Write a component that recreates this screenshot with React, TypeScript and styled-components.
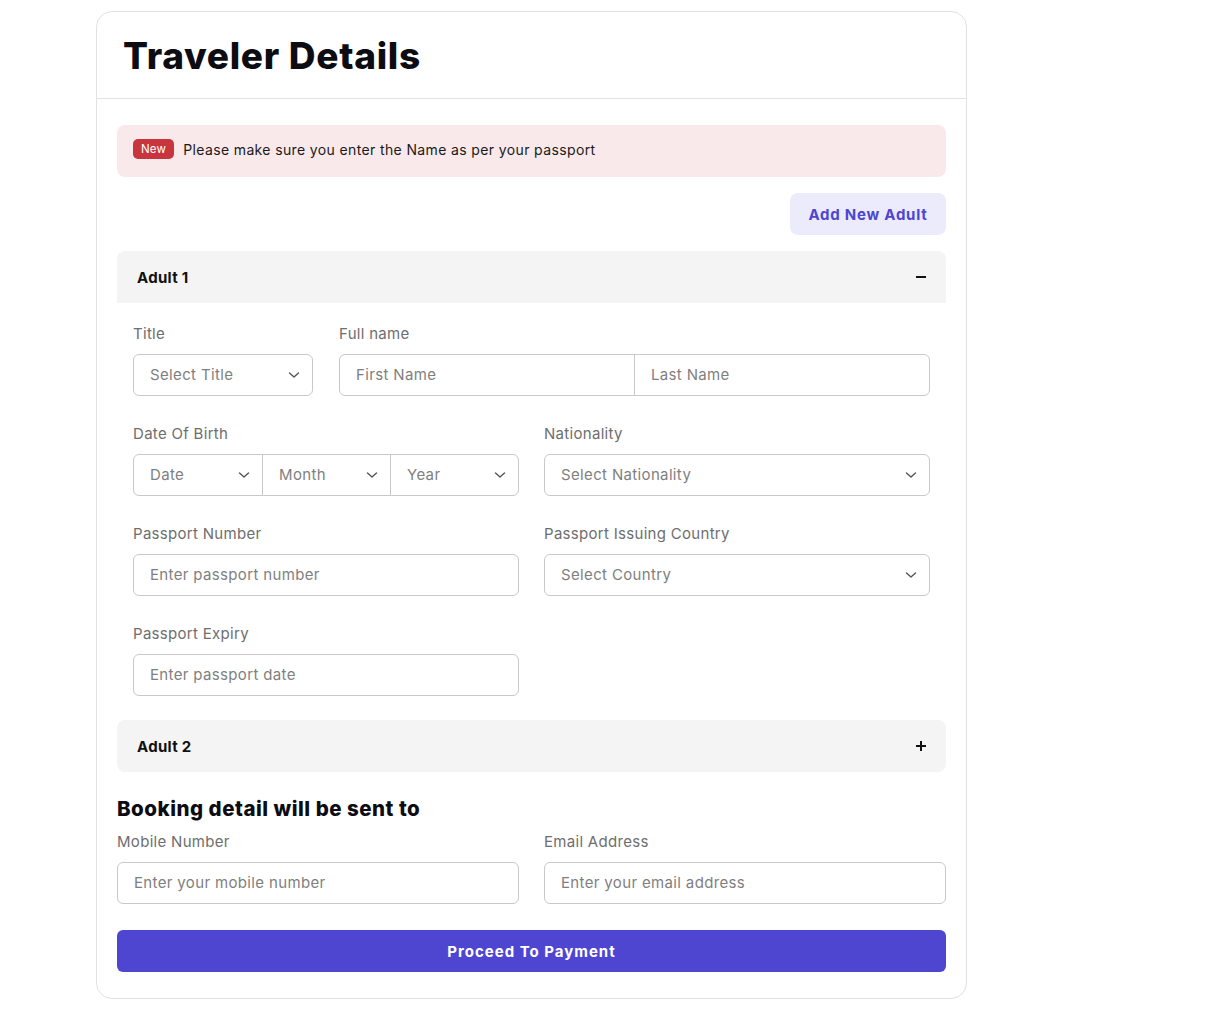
import React from "react";
import styled, { createGlobalStyle } from "styled-components";

const Global = createGlobalStyle`
  html, body { margin: 0; padding: 0; background: #ffffff; }
  body { font-family: "Inter", "Noto Sans", sans-serif; color: #111; }
  * { box-sizing: border-box; }
`;

const Page = styled.div`
  padding: 11px 0 0 96px;
  width: 1214px;
  min-height: 1030px;
`;

const Card = styled.div`
  width: 871px;
  border: 1px solid #e1e1e1;
  border-radius: 16px;
  background: #fff;
`;

const Header = styled.div`
  height: 87px;
  border-bottom: 1px solid #e1e1e1;
  display: flex;
  align-items: center;
  padding: 0 26px;
`;

const Title = styled.h1`
  margin: 0;
  font-family: "Inter", sans-serif;
  font-weight: 800;
  font-size: 37px;
  letter-spacing: 0.7px;
  color: #0c0c12;
  padding-top: 1px;
`;

const Body = styled.div`
  padding: 26px 20px 26px 20px;
  display: flex;
  flex-direction: column;
`;

const Alert = styled.div`
  height: 52px;
  background: #f9e9ea;
  border-radius: 8px;
  display: flex;
  align-items: center;
  gap: 9px;
  padding: 0 16px;
  font-size: 14px;
  color: #1a1a1a;
  letter-spacing: 0.37px;
  padding-bottom: 4px;
`;

const Badge = styled.span`
  background: #c9353f;
  color: #fff;
  font-size: 11.5px;
  letter-spacing: 0.2px;
  border-radius: 5px;
  padding: 0 8px;
  height: 20px;
  line-height: 20px;
`;

const AddRow = styled.div`
  display: flex;
  justify-content: flex-end;
  margin-top: 16px;
`;

const AddButton = styled.button`
  height: 42px;
  width: 156px;
  border: none;
  border-radius: 8px;
  background: #ecebfc;
  color: #4d46d0;
  font-family: "Inter", sans-serif;
  font-weight: 700;
  font-size: 15px;
  letter-spacing: 0.75px;
`;

const Section = styled.div<{ $mt?: number }>`
  margin-top: ${(p) => p.$mt ?? 0}px;
`;

const SectionHead = styled.div<{ $open?: boolean }>`
  height: 52px;
  background: #f4f4f4;
  border-radius: ${(p) => (p.$open ? "8px 8px 0 0" : "8px")};
  display: flex;
  align-items: center;
  justify-content: space-between;
  padding: 0 19px 0 20px;
  font-weight: 700;
  font-size: 15px;
  letter-spacing: 0.3px;
  color: #111;
`;

const SectionBody = styled.div`
  padding: 21px 16px 24px 16px;
  display: flex;
  flex-direction: column;
  gap: 28px;
`;

const Row = styled.div<{ $cols: string; $gap?: number }>`
  display: grid;
  grid-template-columns: ${(p) => p.$cols};
  column-gap: ${(p) => p.$gap ?? 25}px;
`;

const Field = styled.div`
  display: flex;
  flex-direction: column;
`;

const Label = styled.div`
  font-size: 15px;
  line-height: 20px;
  color: #6e6e6e;
  letter-spacing: 0.3px;
  margin-bottom: 10px;
`;

const Box = styled.div`
  height: 42px;
  border: 1px solid #c9c9c9;
  border-radius: 6px;
  display: flex;
  overflow: hidden;
`;

const Seg = styled.div<{ $w?: number; $divider?: boolean }>`
  flex: ${(p) => (p.$w ? `0 0 ${p.$w}px` : "1 1 0")};
  display: flex;
  align-items: center;
  justify-content: space-between;
  padding: 0 12px 1px 16px;
  font-size: 15px;
  letter-spacing: 0.35px;
  color: #7f7f7f;
  border-left: ${(p) => (p.$divider ? "1px solid #c9c9c9" : "none")};
`;

const Heading = styled.h2`
  margin: 23px 0 9px 0;
  font-weight: 800;
  font-size: 20.5px;
  line-height: 28px;
  color: #0c0c12;
  letter-spacing: 0.5px;
`;

const Proceed = styled.button`
  margin-top: 26px;
  height: 42px;
  width: 100%;
  border: none;
  border-radius: 6px;
  background: #4e45d1;
  color: #fff;
  font-family: "Inter", sans-serif;
  font-weight: 700;
  font-size: 15px;
  letter-spacing: 1px;
`;

const Chevron = () => (
  <svg width="12" height="12" viewBox="0 0 12 12" fill="none">
    <path d="M1.5 4 L6 8 L10.5 4" stroke="#555" strokeWidth="1.4" strokeLinecap="round" strokeLinejoin="round" />
  </svg>
);

const Minus = () => (
  <svg width="12" height="12" viewBox="0 0 12 12">
    <rect x="1" y="5" width="10" height="2" fill="#111" />
  </svg>
);

const Plus = () => (
  <svg width="12" height="12" viewBox="0 0 12 12">
    <rect x="1" y="5" width="10" height="2" fill="#111" />
    <rect x="5" y="1" width="2" height="10" fill="#111" />
  </svg>
);

const Select = ({ text }: { text: string }) => (
  <Box>
    <Seg>
      {text}
      <Chevron />
    </Seg>
  </Box>
);

const Input = ({ text }: { text: string }) => (
  <Box>
    <Seg>{text}</Seg>
  </Box>
);

export default function App() {
  return (
    <Page>
      <Global />
      <Card>
        <Header>
          <Title>Traveler Details</Title>
        </Header>
        <Body>
          <Alert>
            <Badge>New</Badge>
            Please make sure you enter the Name as per your passport
          </Alert>
          <AddRow>
            <AddButton>Add New Adult</AddButton>
          </AddRow>
          <Section $mt={16}>
            <SectionHead $open>
              Adult 1
              <Minus />
            </SectionHead>
            <SectionBody>
              <Row $cols="180px 1fr" $gap={26}>
                <Field>
                  <Label>Title</Label>
                  <Select text="Select Title" />
                </Field>
                <Field>
                  <Label>Full name</Label>
                  <Box>
                    <Seg>First Name</Seg>
                    <Seg $divider>Last Name</Seg>
                  </Box>
                </Field>
              </Row>
              <Row $cols="1fr 1fr">
                <Field>
                  <Label>Date Of Birth</Label>
                  <Box>
                    <Seg $w={128}>
                      Date
                      <Chevron />
                    </Seg>
                    <Seg $w={128} $divider>
                      Month
                      <Chevron />
                    </Seg>
                    <Seg $divider>
                      Year
                      <Chevron />
                    </Seg>
                  </Box>
                </Field>
                <Field>
                  <Label>Nationality</Label>
                  <Select text="Select Nationality" />
                </Field>
              </Row>
              <Row $cols="1fr 1fr">
                <Field>
                  <Label>Passport Number</Label>
                  <Input text="Enter passport number" />
                </Field>
                <Field>
                  <Label>Passport Issuing Country</Label>
                  <Select text="Select Country" />
                </Field>
              </Row>
              <Row $cols="1fr 1fr">
                <Field>
                  <Label>Passport Expiry</Label>
                  <Input text="Enter passport date" />
                </Field>
              </Row>
            </SectionBody>
          </Section>
          <Section>
            <SectionHead>
              Adult 2
              <Plus />
            </SectionHead>
          </Section>
          <Heading>Booking detail will be sent to</Heading>
          <Row $cols="1fr 1fr">
            <Field>
              <Label>Mobile Number</Label>
              <Input text="Enter your mobile number" />
            </Field>
            <Field>
              <Label>Email Address</Label>
              <Input text="Enter your email address" />
            </Field>
          </Row>
          <Proceed>Proceed To Payment</Proceed>
        </Body>
      </Card>
    </Page>
  );
}
